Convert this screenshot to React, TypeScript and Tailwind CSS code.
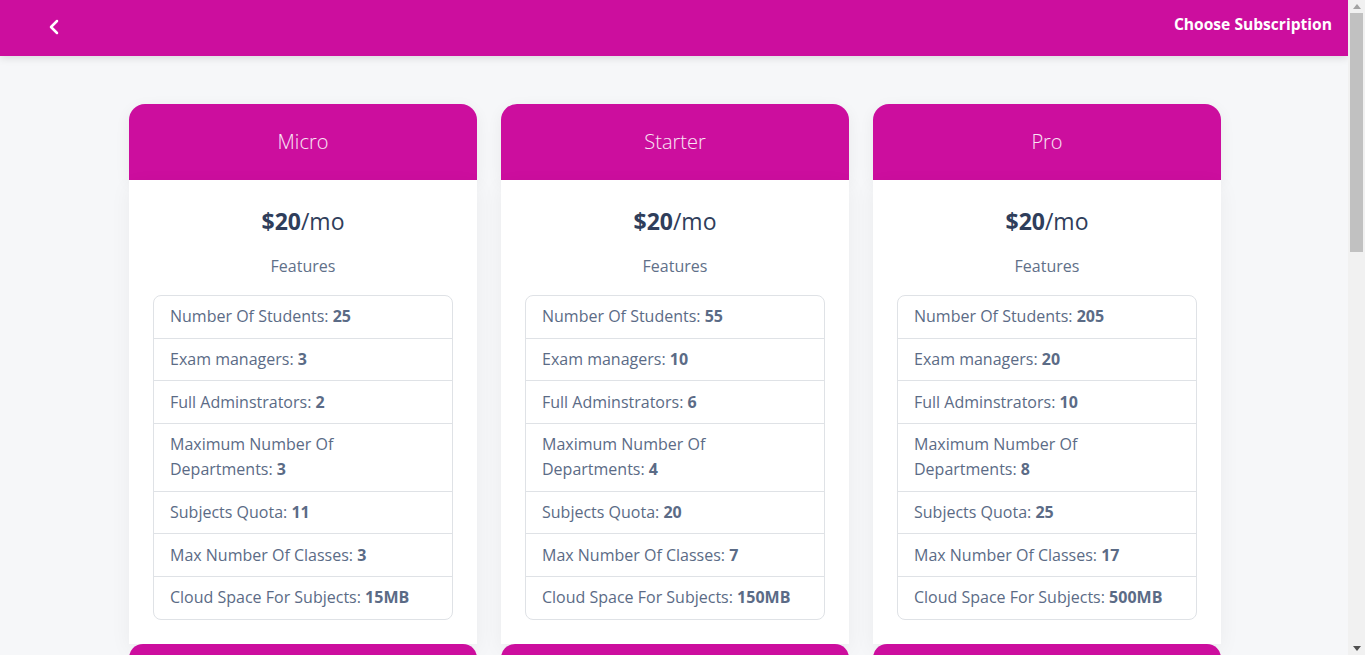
import React from "react";
import { ChevronLeft } from "lucide-react";

// plan data
interface Plan {
  name: string;
  price: number;
  students: number;
  examManagers: number;
  admins: number;
  departments: number;
  subjects: number;
  classes: number;
  space: string;
}

const plans: Plan[] = [
  { name: "Micro", price: 20, students: 25, examManagers: 3, admins: 2, departments: 3, subjects: 11, classes: 3, space: "15MB" },
  { name: "Starter", price: 20, students: 55, examManagers: 10, admins: 6, departments: 4, subjects: 20, classes: 7, space: "150MB" },
  { name: "Pro", price: 20, students: 205, examManagers: 20, admins: 10, departments: 8, subjects: 25, classes: 17, space: "500MB" },
];

function Row({ label, value, first }: { label: string; value: string | number; first?: boolean }) {
  return (
    <li
      className={
        "px-4 py-[8.35px] leading-[25px] text-[16px] text-[#5b6b86]" +
        (first ? "" : " border-t border-[#dfe2e6]")
      }
    >
      {label}: <span className="font-bold">{value}</span>
    </li>
  );
}

function PlanCard({ plan }: { plan: Plan }) {
  return (
    <div className="flex flex-col">
      <div className="rounded-t-2xl bg-[#cc0e9e] shadow-[0_4px_16px_rgba(0,0,0,0.06)] h-[76px] flex items-center justify-center">
        <span className="text-[20px] font-light text-white/90">{plan.name}</span>
      </div>
      <div className="bg-white px-6 pt-[25px] pb-[24px] shadow-[0_6px_20px_rgba(0,0,0,0.05)]">
        <div className="text-center text-[23px] leading-8 text-[#2f3e5b]">
          <span className="font-bold">${plan.price}</span>/mo
        </div>
        <div className="mt-[17px] mb-[17px] text-center text-[16px] leading-6 text-[#5f7089]">
          Features
        </div>
        <ul className="rounded-lg border border-[#dfe2e6]">
          <Row first label="Number Of Students" value={plan.students} />
          <Row label="Exam managers" value={plan.examManagers} />
          <Row label="Full Adminstrators" value={plan.admins} />
          <Row label="Maximum Number Of Departments" value={plan.departments} />
          <Row label="Subjects Quota" value={plan.subjects} />
          <Row label="Max Number Of Classes" value={plan.classes} />
          <Row label="Cloud Space For Subjects" value={plan.space} />
        </ul>
      </div>
      <button className="h-[52px] rounded-[14px] bg-[#cc0e9e] text-white font-semibold text-[16px]">
        Subscribe
      </button>
    </div>
  );
}

// browser scrollbar as seen in the screenshot
function FakeScrollbar() {
  return (
    <div className="w-[17px] shrink-0 h-full bg-[#f1f1f1] flex flex-col items-center">
      <div className="h-[13px] flex items-center justify-center">
        <svg width="8" height="5" viewBox="0 0 8 5">
          <path d="M0 5 L4 0 L8 5 Z" fill="#a3a3a3" />
        </svg>
      </div>
      <div className="w-[13px] h-[239px] bg-[#c1c1c1]" />
      <div className="flex-1" />
      <div className="h-[13px] flex items-center justify-center">
        <svg width="8" height="5" viewBox="0 0 8 5">
          <path d="M0 0 L8 0 L4 5 Z" fill="#505050" />
        </svg>
      </div>
    </div>
  );
}

export default function App(): JSX.Element {
  return (
    <div
      className="flex h-screen overflow-hidden"
      style={{ fontFamily: "'Open Sans', 'Liberation Sans', sans-serif" }}
    >
      <div className="flex-1 min-w-0 h-full overflow-hidden bg-[#f6f7f9]">
        <header className="relative z-10 h-14 bg-[#cc0e9e] shadow-[0_2px_8px_rgba(0,0,0,0.12)] flex items-start justify-between pl-[42px] pr-4">
          <button className="mt-[15px] text-white">
            <ChevronLeft size={24} strokeWidth={2.5} />
          </button>
          <h1 className="mt-[12px] text-[15.6px] leading-6 font-bold text-white">
            Choose Subscription
          </h1>
        </header>
        <main className="pt-12 pb-12 pl-[2px]">
          <div className="mx-auto w-[1092px] grid grid-cols-3 gap-6">
            {plans.map((plan) => (
              <PlanCard key={plan.name} plan={plan} />
            ))}
          </div>
        </main>
      </div>
      <FakeScrollbar />
    </div>
  );
}
